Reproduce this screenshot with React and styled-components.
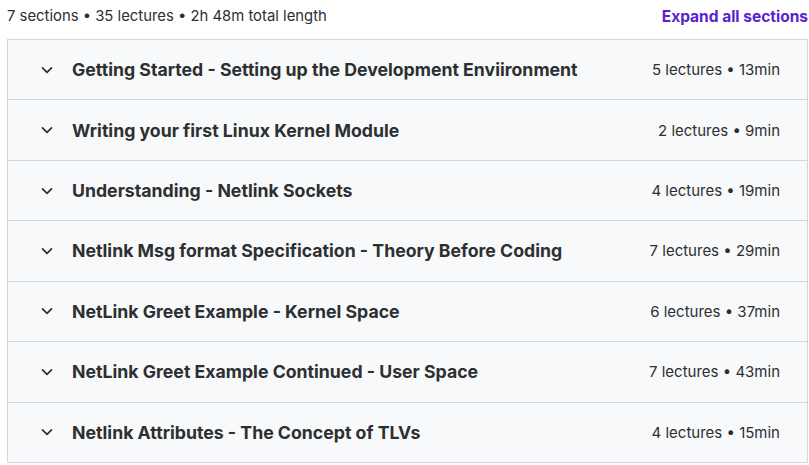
import React from "react";
import styled, { createGlobalStyle } from "styled-components";

const GlobalStyle = createGlobalStyle`
  body {
    margin: 0;
    background: #ffffff;
    font-family: Inter, "Liberation Sans", Arial, sans-serif;
    color: #2d2f31;
  }
`;

const Curriculum = styled.div`
  width: 809px;
  box-sizing: border-box;
  padding: 0 1px 0 7px;
`;

const Summary = styled.div`
  height: 32px;
  margin-bottom: 7px;
  display: flex;
  align-items: center;
  justify-content: space-between;
`;

const Stats = styled.span`
  font-size: 14.85px;
  color: #2d2f31;
`;

const ExpandButton = styled.button`
  border: none;
  background: none;
  padding: 0;
  font-family: inherit;
  font-size: 15.5px;
  font-weight: 700;
  color: #5624d0;
  cursor: pointer;
`;

const SectionList = styled.div`
  border: 1px solid #d1d7dc;
`;

const SectionRow = styled.div`
  height: 59.43px;
  display: flex;
  align-items: center;
  background: #f7f9fa;
  padding: 0 27px 0 33px;
  & + & {
    border-top: 1px solid #d1d7dc;
  }
`;

const Chevron = styled.svg`
  width: 12px;
  height: 12px;
  flex-shrink: 0;
  margin-right: 19px;
`;

const SectionTitle = styled.span`
  flex: 1;
  font-size: 17.7px;
  font-weight: 700;
  color: #2d2f31;
`;

const SectionMeta = styled.span`
  font-size: 15px;
  color: #2d2f31;
`;

const sections = [
  ["Getting Started - Setting up the Development Enviironment", "5 lectures • 13min"],
  ["Writing your first Linux Kernel Module", "2 lectures • 9min"],
  ["Understanding - Netlink Sockets", "4 lectures • 19min"],
  ["Netlink Msg format Specification - Theory Before Coding", "7 lectures • 29min"],
  ["NetLink Greet Example - Kernel Space", "6 lectures • 37min"],
  ["NetLink Greet Example Continued - User Space", "7 lectures • 43min"],
  ["Netlink Attributes - The Concept of TLVs", "4 lectures • 15min"],
];

const App = () => (
  <Curriculum>
    <GlobalStyle />
    <Summary>
      <Stats>7 sections • 35 lectures • 2h 48m total length</Stats>
      <ExpandButton>Expand all sections</ExpandButton>
    </Summary>
    <SectionList>
      {sections.map(([title, meta]) => (
        <SectionRow key={title}>
          <Chevron viewBox="0 0 12 12">
            <polyline
              points="1.5,3.8 6,8.3 10.5,3.8"
              fill="none"
              stroke="#2d2f31"
              strokeWidth="1.7"
              strokeLinecap="round"
              strokeLinejoin="round"
            />
          </Chevron>
          <SectionTitle>{title}</SectionTitle>
          <SectionMeta>{meta}</SectionMeta>
        </SectionRow>
      ))}
    </SectionList>
  </Curriculum>
);

export default App;
